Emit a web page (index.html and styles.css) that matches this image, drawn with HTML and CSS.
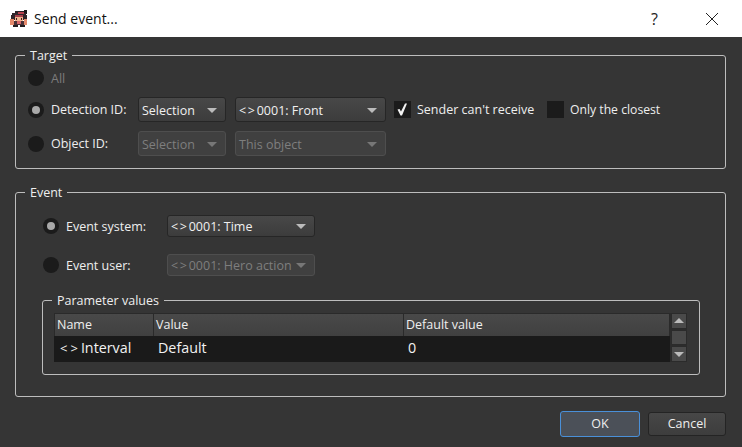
FILE: index.html

```html
<!DOCTYPE html>
<html lang="en">
<head>
  <meta charset="UTF-8">
  <title>Send event...</title>
  <link rel="stylesheet" href="styles.css">
</head>
<body>
  <div class="titlebar">
    <svg class="app-icon" width="18" height="18" viewBox="0 0 18 18" shape-rendering="crispEdges">
      <rect x="5" y="1" width="9" height="2" fill="#2b2226"/>
      <rect x="14" y="0" width="3" height="4" fill="#1d1a1c"/>
      <rect x="2" y="3" width="14" height="3" fill="#33262b"/>
      <rect x="8" y="2" width="6" height="2" fill="#b8434f"/>
      <rect x="1" y="5" width="4" height="5" fill="#2f2529"/>
      <rect x="13" y="5" width="4" height="5" fill="#2f2529"/>
      <rect x="5" y="6" width="8" height="5" fill="#f0b48e"/>
      <rect x="5" y="5" width="8" height="2" fill="#a8404a"/>
      <rect x="6" y="8" width="1" height="2" fill="#3a1c20"/>
      <rect x="11" y="8" width="1" height="2" fill="#3a1c20"/>
      <rect x="0" y="9" width="4" height="6" fill="#e58a6c"/>
      <rect x="14" y="9" width="3" height="6" fill="#e58a6c"/>
      <rect x="4" y="11" width="10" height="4" fill="#4b3238"/>
      <rect x="7" y="11" width="4" height="3" fill="#d8666a"/>
      <rect x="3" y="15" width="5" height="2" fill="#231c1f"/>
      <rect x="10" y="15" width="5" height="2" fill="#231c1f"/>
    </svg>
    <span class="title">Send event...</span>
    <span class="help">?</span>
    <svg class="close" width="14" height="14" viewBox="0 0 14 14">
      <path d="M1 1 L13 13 M13 1 L1 13" stroke="#222" stroke-width="1" fill="none"/>
    </svg>
  </div>

  <div class="content">
    <fieldset class="group target">
      <legend>Target</legend>
      <div class="group-body">
        <div class="row row-all">
          <span class="radio"></span>
          <span class="label disabled">All</span>
        </div>
        <div class="row row-detection">
          <span class="radio on"></span>
          <span class="label w-id">Detection ID:</span>
          <div class="combo w-sel"><span>Selection</span><i class="arrow"></i></div>
          <div class="combo w-name"><span><span class="tag">&lt;&gt;</span>0001: Front</span><i class="arrow"></i></div>
          <span class="check">
            <svg width="17" height="17" viewBox="0 0 17 17"><path d="M3.5 8.5 L5.5 8 L7 10.5 L11 2.5 L13 2.5 L8 14.5 L6.5 14.5 Z" fill="#f2f2f2"/></svg>
          </span>
          <span class="label w-sender">Sender can't receive</span>
          <span class="check"></span>
          <span class="label closest">Only the closest</span>
        </div>
        <div class="row row-object">
          <span class="radio"></span>
          <span class="label w-id">Object ID:</span>
          <div class="combo w-sel off"><span>Selection</span><i class="arrow"></i></div>
          <div class="combo w-name off"><span>This object</span><i class="arrow"></i></div>
        </div>
      </div>
    </fieldset>

    <fieldset class="group event">
      <legend>Event</legend>
      <div class="group-body">
        <div class="row row-system">
          <span class="radio on"></span>
          <span class="label w-ev">Event system:</span>
          <div class="combo w-ev-combo"><span><span class="tag">&lt;&gt;</span>0001: Time</span><i class="arrow"></i></div>
        </div>
        <div class="row row-user">
          <span class="radio"></span>
          <span class="label w-ev">Event user:</span>
          <div class="combo w-ev-combo off"><span><span class="tag">&lt;&gt;</span>0001: Hero action</span><i class="arrow"></i></div>
        </div>

        <fieldset class="group params">
          <legend>Parameter values</legend>
          <div class="group-body">
            <div class="table">
              <div class="table-main">
                <div class="thead">
                  <div class="th col-name">Name</div>
                  <div class="th col-value">Value</div>
                  <div class="th col-default">Default value</div>
                </div>
                <div class="tbody">
                  <div class="td col-name"><span class="row-tag">&lt;&gt;</span>Interval</div>
                  <div class="td col-value">Default</div>
                  <div class="td col-default">0</div>
                </div>
              </div>
              <div class="scrollbar">
                <div class="sb-btn"><i class="arrow up"></i></div>
                <div class="sb-track"></div>
                <div class="sb-btn"><i class="arrow"></i></div>
              </div>
            </div>
          </div>
        </fieldset>
      </div>
    </fieldset>

    <div class="buttons">
      <div class="btn default">OK</div>
      <div class="btn">Cancel</div>
    </div>
  </div>
</body>
</html>
```

FILE: styles.css

```css
* { box-sizing: border-box; }
html, body { margin: 0; height: 100%; overflow: hidden; }
body {
  font-family: "Open Sans", "Noto Sans", sans-serif;
  font-size: 12.5px;
  color: #eee;
  background: #353535;
}

.titlebar {
  height: 37px;
  background: #fff;
  display: flex;
  align-items: center;
  color: #111;
  padding-left: 10px;
}
.app-icon { margin-right: 6px; }
.title { font-size: 14px; flex: 1; }
.help { font-size: 16px; margin-right: 47px; color: #222; }
.close { margin-right: 23px; }

.content { padding: 10px 16px 0 15px; }

.group {
  border: 1px solid #bdbdbd;
  border-radius: 3px;
  margin: 0;
  padding: 0;
  min-width: 0;
}
.group legend {
  margin-left: 9px;
  padding: 0 5px;
  line-height: 17px;
  color: #eee;
}

.target { height: 122px; }
.target > .group-body { padding: 6px 0 0 12px; }
.event { height: 213px; margin-top: 15px; }
.event > .group-body { padding: 14px 0 0 26px; }
.params { height: 83px; margin: 16px 25px 0 0; }
.params > .group-body { padding: 4px 12px 0 11px; }

.row { display: flex; align-items: center; }
.row-all { height: 16px; margin-bottom: 11px; }
.row-detection, .row-object { height: 25px; }
.row-object { margin-top: 9px; }
.row-system, .row-user { height: 22px; padding-left: 1px; }
.row-user { margin-top: 17px; }

.radio {
  width: 16px;
  height: 16px;
  border-radius: 50%;
  background: #1b1b1b;
  flex: none;
  display: flex;
  align-items: center;
  justify-content: center;
  margin-right: 7px;
}
.radio.on::after {
  content: "";
  width: 8px;
  height: 8px;
  border-radius: 50%;
  background: #a8a8a8;
}

.label { white-space: nowrap; }
.disabled { color: #7c7c7c; }
.w-id { width: 87px; }
.w-ev { width: 101px; }
.w-sender { width: 124px; }
.closest { font-size: 12.2px; }

.combo {
  height: 100%;
  background: linear-gradient(#484848, #3c3c3c);
  border: 1px solid #262626;
  border-radius: 3px;
  display: flex;
  align-items: center;
  justify-content: space-between;
  padding: 1px 8px 0 3px;
  color: #f0f0f0;
  flex: none;
  white-space: nowrap;
}
.combo.off {
  color: #7e7e7e;
  background: #404040;
  border-color: #4e4e4e;
}
.w-sel { width: 88px; margin-right: 9px; }
.w-name { width: 151px; }
.w-ev-combo { width: 148px; }
.tag { letter-spacing: 1.7px; }

.arrow {
  width: 0;
  height: 0;
  border-left: 5px solid transparent;
  border-right: 5px solid transparent;
  border-top: 5px solid #bbb;
  flex: none;
}
.arrow.up { border-top: 0; border-bottom: 5px solid #bbb; }
.combo.off .arrow { border-top-color: #777; }

.check {
  width: 17px;
  height: 17px;
  background: #1b1b1b;
  flex: none;
  margin-left: 8px;
  margin-right: 6px;
  display: block;
}
.w-sender + .check { margin-left: 6px; }
.check svg { display: block; }

.table { display: flex; height: 49px; }
.table-main { flex: 1; background: #1a1a1a; min-width: 0; }
.thead {
  display: flex;
  height: 23px;
  background: linear-gradient(#494949, #404040);
  border: 1px solid #2a2a2a;
  border-bottom: 0;
}
.th {
  padding-left: 2px;
  line-height: 22px;
  border-right: 1px solid #2a2a2a;
}
.th:last-child { border-right: 0; }
.tbody { display: flex; height: 26px; font-size: 14.3px; line-height: 24px; }
.td { padding-left: 5px; color: #f2f2f2; }
.td.col-name { padding-left: 6px; }
.col-name { width: 99px; }
.col-value { width: 250px; }
.col-default { flex: 1; }
.row-tag { font-size: 13px; letter-spacing: 3px; }

.scrollbar {
  width: 17px;
  background: #2c2c2c;
  flex: none;
  display: flex;
  flex-direction: column;
  gap: 1px;
  padding: 0 0 0 1px;
}
.sb-btn, .sb-track {
  flex: 1;
  background: #4a4a4a;
  border: 1px solid #2b2b2b;
  display: flex;
  align-items: center;
  justify-content: center;
}

.buttons {
  display: flex;
  justify-content: flex-end;
  align-items: center;
  gap: 8px;
  margin-top: 14px;
}
.btn {
  width: 78px;
  height: 24px;
  border: 1px solid #242424;
  border-radius: 3px;
  background: linear-gradient(#474747, #3d3d3d);
  text-align: center;
  line-height: 22px;
}
.btn.default {
  width: 80px;
  height: 26px;
  line-height: 24px;
  border-color: #4a90d9;
  background: #4b5058;
}
```
